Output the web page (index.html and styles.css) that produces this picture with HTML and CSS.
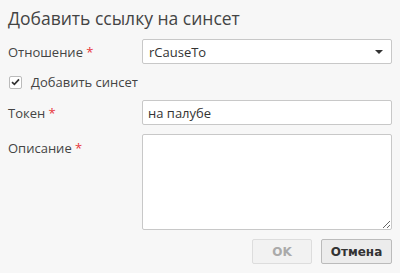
FILE: index.html
```html
<!DOCTYPE html>
<html lang="ru">
<head>
    <meta charset="UTF-8">
    <meta name="viewport" content="width=device-width, initial-scale=1.0">
    <title>Добавить ссылку на синсет</title>
    <link rel="stylesheet" href="styles.css">
</head>
<body>
    <div class="dialog">
        <h1 class="dialog-title">Добавить ссылку на синсет</h1>
        <form class="link-form">
            <label class="field-label" for="relation">Отношение <span class="req">*</span></label>
            <div class="select-box" id="relation">
                <span>rCauseTo</span>
                <span class="caret"></span>
            </div>

            <label class="check-row">
                <span class="check-box">
                    <svg width="9" height="8" viewBox="0 0 9 8"><path d="M1 4.2 L3.4 6.4 L8 1.4" fill="none" stroke="#333" stroke-width="1.7"/></svg>
                </span>
                Добавить синсет
            </label>

            <label class="field-label" for="token">Токен <span class="req">*</span></label>
            <input class="text-input" type="text" id="token" value="на палубе">

            <label class="field-label label-top" for="desc">Описание <span class="req">*</span></label>
            <textarea class="text-area" id="desc"></textarea>

            <div class="buttons">
                <button type="button" class="btn" disabled>OK</button>
                <button type="button" class="btn btn-cancel">Отмена</button>
            </div>
        </form>
    </div>
</body>
</html>
```

FILE: styles.css
```css
html, body {
    margin: 0;
    padding: 0;
    background-color: #f7f7f7;
}
body {
    font-family: "Open Sans", sans-serif;
    color: #444;
    width: 400px;
    height: 273px;
    overflow: hidden;
}
.dialog {
    padding: 0 8px 0 8px;
}
.dialog-title {
    font-size: 17.5px;
    font-weight: normal;
    line-height: 24px;
    margin: 0;
    padding: 6px 0 9px 0;
    color: #444;
}
.link-form {
    display: grid;
    grid-template-columns: 134px 250px;
    align-items: center;
    row-gap: 9px;
    font-size: 13px;
}
.field-label {
    color: #444;
}
.label-top {
    align-self: start;
    padding-top: 5px;
}
.req {
    color: #e8353a;
}
.select-box {
    height: 23px;
    border: 1px solid #c8c8c8;
    border-radius: 2px;
    background-color: #fff;
    display: flex;
    align-items: center;
    justify-content: space-between;
    padding: 0 8px 0 6px;
    color: #333;
}
.caret {
    width: 0;
    height: 0;
    border-left: 4px solid transparent;
    border-right: 4px solid transparent;
    border-top: 4px solid #333;
}
.check-row {
    grid-column: 1 / 3;
    display: flex;
    align-items: center;
    gap: 9px;
    padding-left: 1px;
    height: 18px;
}
.check-box {
    width: 11px;
    height: 11px;
    border: 1px solid #bbb;
    border-radius: 2px;
    background-color: #fff;
    display: flex;
    align-items: center;
    justify-content: center;
}
.text-input {
    box-sizing: border-box;
    height: 25px;
    border: 1px solid #c8c8c8;
    border-radius: 2px;
    padding: 0 5px;
    font-family: "Open Sans", sans-serif;
    font-size: 13px;
    color: #333;
    margin: 0;
}
.text-area {
    box-sizing: border-box;
    height: 96px;
    border: 1px solid #c8c8c8;
    border-radius: 2px;
    margin: 0;
    font-family: "Open Sans", sans-serif;
    font-size: 13px;
}
.buttons {
    grid-column: 1 / 3;
    display: flex;
    justify-content: flex-end;
    gap: 9px;
}
.btn {
    box-sizing: border-box;
    height: 25px;
    width: 60px;
    border: 1px solid #ddd;
    border-radius: 2px;
    background-color: #f2f2f2;
    color: #aaa;
    font-family: "DejaVu Sans", sans-serif;
    font-weight: bold;
    font-size: 12px;
    padding: 0;
}
.btn-cancel {
    width: 71px;
    border-color: #bbb;
    background-color: #ececec;
    color: #333;
}
```
